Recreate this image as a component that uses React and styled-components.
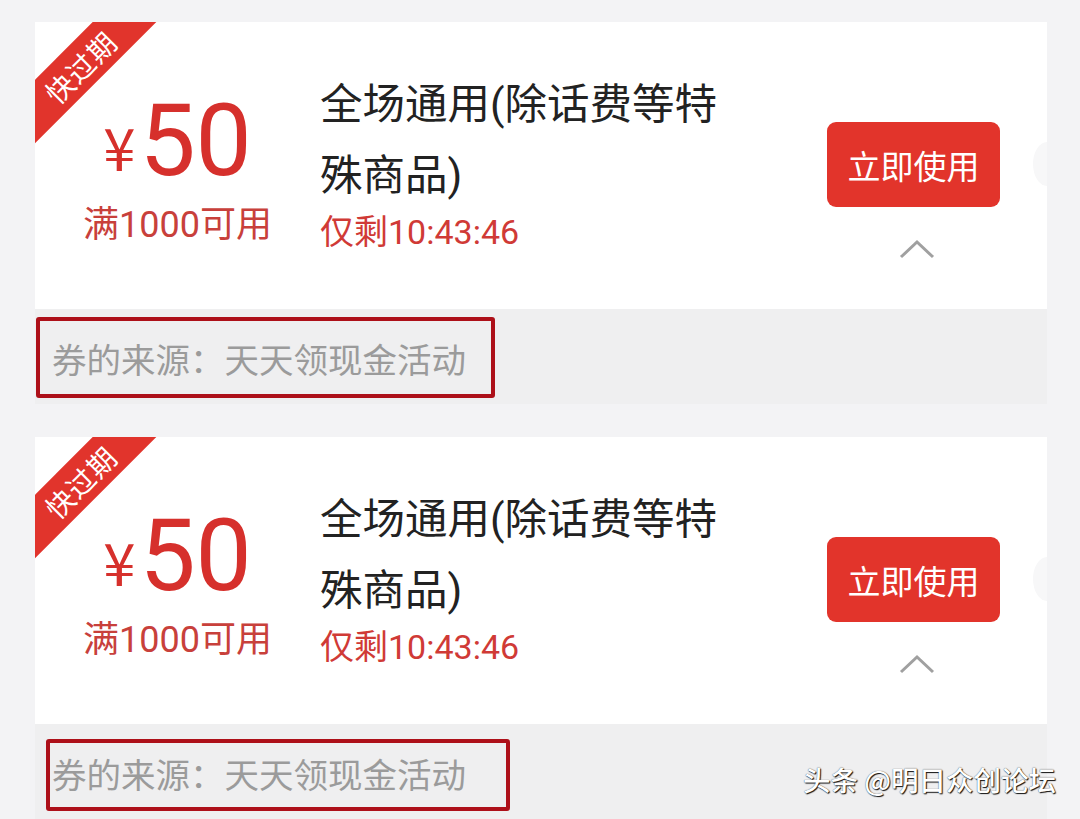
import React from "react";
import styled, { createGlobalStyle } from "styled-components";

const GlobalStyle = createGlobalStyle`
  html, body {
    margin: 0;
    padding: 0;
    background: #f3f3f5;
  }
  body {
    font-family: Roboto, "Noto Sans CJK SC", sans-serif;
    overflow: hidden;
  }
`;

const coupons = [
  {
    id: 1,
    tag: "快过期",
    amount: "50",
    limit: "满1000可用",
    title: "全场通用(除话费等特殊商品)",
    left: "仅剩10:43:46",
    source: "券的来源：天天领现金活动",
    mark: { left: 1, top: 8, w: 459, h: 81 },
  },
  {
    id: 2,
    tag: "快过期",
    amount: "50",
    limit: "满1000可用",
    title: "全场通用(除话费等特殊商品)",
    left: "仅剩10:43:46",
    source: "券的来源：天天领现金活动",
    mark: { left: 11, top: 15, w: 464, h: 72 },
  },
];

const Page = styled.div`
  position: relative;
  height: 819px;
  padding: 22px 33px 0 35px;
  box-sizing: border-box;
  display: flex;
  flex-direction: column;
  gap: 33px;
`;

const Card = styled.div`
  display: flex;
  flex-direction: column;
`;

const Top = styled.div`
  position: relative;
  overflow: hidden;
  height: 287px;
  background: #fff;
  display: flex;
  align-items: center;
`;

const Notch = styled.div`
  position: absolute;
  right: -14px;
  top: 120px;
  width: 28px;
  height: 44px;
  border-radius: 50%;
  background: #f7f7f8;
`;

const Ribbon = styled.div`
  position: absolute;
  left: -46px;
  top: 22px;
  width: 182px;
  height: 45px;
  background: #e1342c;
  color: #fff;
  transform: rotate(-45deg);
  display: flex;
  align-items: center;
  justify-content: center;
  font-family: "Noto Sans CJK SC", sans-serif;
  font-size: 28px;
  letter-spacing: 1px;
`;

const Amount = styled.div`
  width: 285px;
  display: flex;
  flex-direction: column;
  align-items: center;
  color: #d6302c;
  margin-top: 6px;
`;

const Price = styled.div`
  display: flex;
  align-items: center;
  line-height: 1;
`;

const Yen = styled.span`
  font-family: "Noto Sans CJK SC", sans-serif;
  font-size: 58px;
  margin-right: 4px;
  margin-top: 10px;
`;

const Value = styled.span`
  font-family: Roboto, sans-serif;
  font-size: 100px;
`;

const Limit = styled.div`
  margin-top: 4px;
  font-size: 36px;
  color: #c8403b;
`;

const Info = styled.div`
  flex: 1;
  display: flex;
  flex-direction: column;
  padding-right: 70px;
  margin-top: -10px;
`;

const Title = styled.div`
  font-family: Roboto, "Noto Sans CJK SC", sans-serif;
  font-size: 42.5px;
  line-height: 71px;
  color: #222;
  width: 412px;
`;

const Remain = styled.div`
  font-size: 34px;
  line-height: 42px;
  color: #d03a36;
  margin-top: 0;
`;

const Side = styled.div`
  align-self: flex-start;
  width: 220px;
  padding: 100px 47px 0 0;
  box-sizing: border-box;
  display: flex;
  flex-direction: column;
  align-items: center;
`;

const UseButton = styled.button`
  width: 173px;
  height: 85px;
  border: none;
  border-radius: 9px;
  background: #e2342b;
  color: #fff;
  font-family: "Noto Sans CJK SC", sans-serif;
  font-size: 33px;
  padding: 0;
`;

const Chevron = styled.svg`
  margin-top: 32px;
  margin-left: 6px;
`;

const Footer = styled.div`
  position: relative;
  height: 95px;
  background: #efeff0;
  display: flex;
  align-items: center;
  padding-left: 17px;
`;

const Source = styled.div`
  font-family: "Noto Sans CJK SC", sans-serif;
  font-size: 34.5px;
  color: #9b9b9b;
  margin-top: 2px;
`;

const Mark = styled.div`
  position: absolute;
  left: ${(p) => p.$left}px;
  top: ${(p) => p.$top}px;
  width: ${(p) => p.$w}px;
  height: ${(p) => p.$h}px;
  box-sizing: border-box;
  border: 4px solid #ad1019;
  border-radius: 3px;
`;

const Watermark = styled.div`
  position: absolute;
  right: 24px;
  bottom: 20px;
  font-family: "Noto Sans CJK SC", sans-serif;
  font-size: 27.5px;
  font-weight: 500;
  color: #fff;
  text-shadow: 1px 1px 1px #111, 0 0 1px #333;
`;

const Coupon = ({ data }) => (
  <Card>
    <Top>
      <Ribbon>{data.tag}</Ribbon>
      <Notch />
      <Amount>
        <Price>
          <Yen>¥</Yen>
          <Value>{data.amount}</Value>
        </Price>
        <Limit>{data.limit}</Limit>
      </Amount>
      <Info>
        <Title>{data.title}</Title>
        <Remain>{data.left}</Remain>
      </Info>
      <Side>
        <UseButton>立即使用</UseButton>
        <Chevron width="36" height="20" viewBox="0 0 36 20">
          <polyline
            points="2,18 18,3 34,18"
            fill="none"
            stroke="#a0a0a0"
            strokeWidth="3"
          />
        </Chevron>
      </Side>
    </Top>
    <Footer>
      <Source>{data.source}</Source>
      <Mark $left={data.mark.left} $top={data.mark.top} $w={data.mark.w} $h={data.mark.h} />
    </Footer>
  </Card>
);

const App = () => (
  <>
    <GlobalStyle />
    <Page>
      {coupons.map((c) => (
        <Coupon key={c.id} data={c} />
      ))}
      <Watermark>头条 @明日众创论坛</Watermark>
    </Page>
  </>
);

export default App;
